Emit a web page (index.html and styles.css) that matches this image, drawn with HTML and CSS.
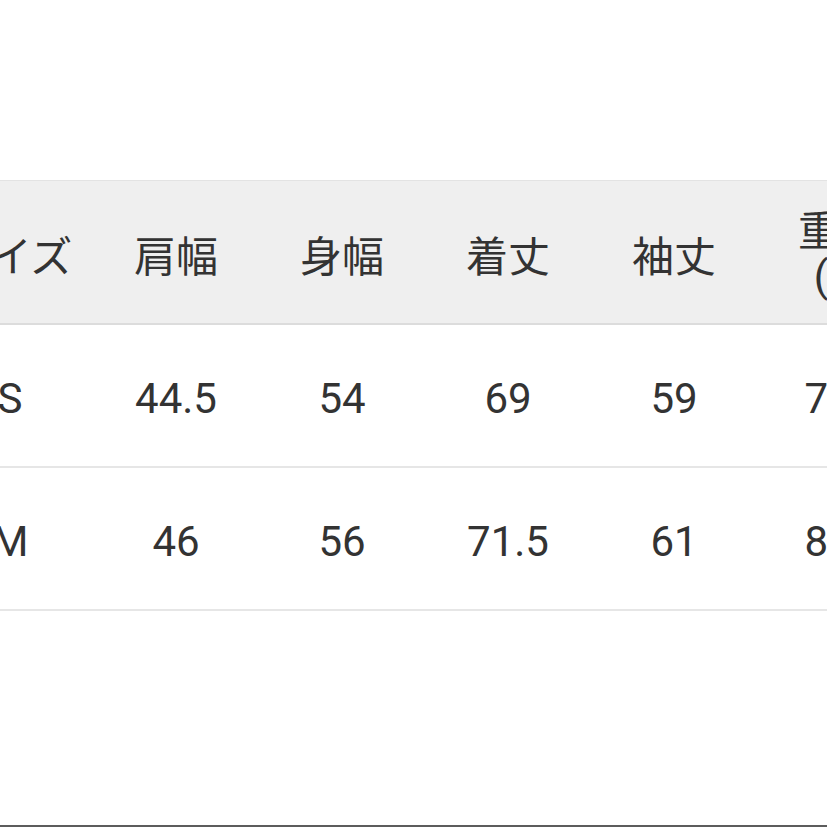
FILE: index.html
```html
<!DOCTYPE html>
<html lang="ja">
<head>
<meta charset="utf-8">
<link rel="stylesheet" href="styles.css">
</head>
<body>
<div class="page">
  <div class="top-space"></div>
  <table class="size-table">
    <thead>
      <tr class="head-row">
        <th>サイズ</th>
        <th>肩幅</th>
        <th>身幅</th>
        <th>着丈</th>
        <th>袖丈</th>
        <th class="two-line">重量<br>(g)</th>
      </tr>
    </thead>
    <tbody>
      <tr class="body-row">
        <td>S</td>
        <td>44.5</td>
        <td>54</td>
        <td>69</td>
        <td>59</td>
        <td>780</td>
      </tr>
      <tr class="body-row">
        <td>M</td>
        <td>46</td>
        <td>56</td>
        <td>71.5</td>
        <td>61</td>
        <td>820</td>
      </tr>
    </tbody>
  </table>
  <div class="filler"></div>
  <div class="bottom-bar"></div>
</div>
</body>
</html>
```
FILE: styles.css
```css
html, body {
  margin: 0;
  padding: 0;
  background: #ffffff;
  overflow: hidden;
}
.page {
  width: 827px;
  height: 827px;
  display: flex;
  flex-direction: column;
  overflow: hidden;
  font-family: Roboto, "Noto Sans CJK JP", sans-serif;
  color: #333333;
}
.top-space {
  height: 180px;
  flex: none;
}
.size-table {
  flex: none;
  width: 996px;
  margin-left: -73px;
  table-layout: fixed;
  border-collapse: collapse;
}
.size-table th,
.size-table td {
  width: 166px;
  padding: 0;
  text-align: center;
  font-size: 42px;
  font-weight: 400;
  white-space: nowrap;
}
.head-row {
  background: #efefef;
  border-top: 1px solid #e3e3e3;
  border-bottom: 2px solid #dcdcdc;
}
.size-table .head-row th {
  height: 131px;
  padding-top: 11px;
  line-height: 48px;
}
.size-table .head-row th.two-line {
  height: 138px;
  padding-top: 4px;
  line-height: 45px;
}
.body-row {
  border-bottom: 2px solid #e6e6e6;
}
.size-table .body-row td {
  height: 134px;
  padding-top: 7px;
  line-height: 48px;
}
.filler {
  flex: 1;
}
.bottom-bar {
  flex: none;
  height: 2px;
  background: #5c5c5c;
}
```
